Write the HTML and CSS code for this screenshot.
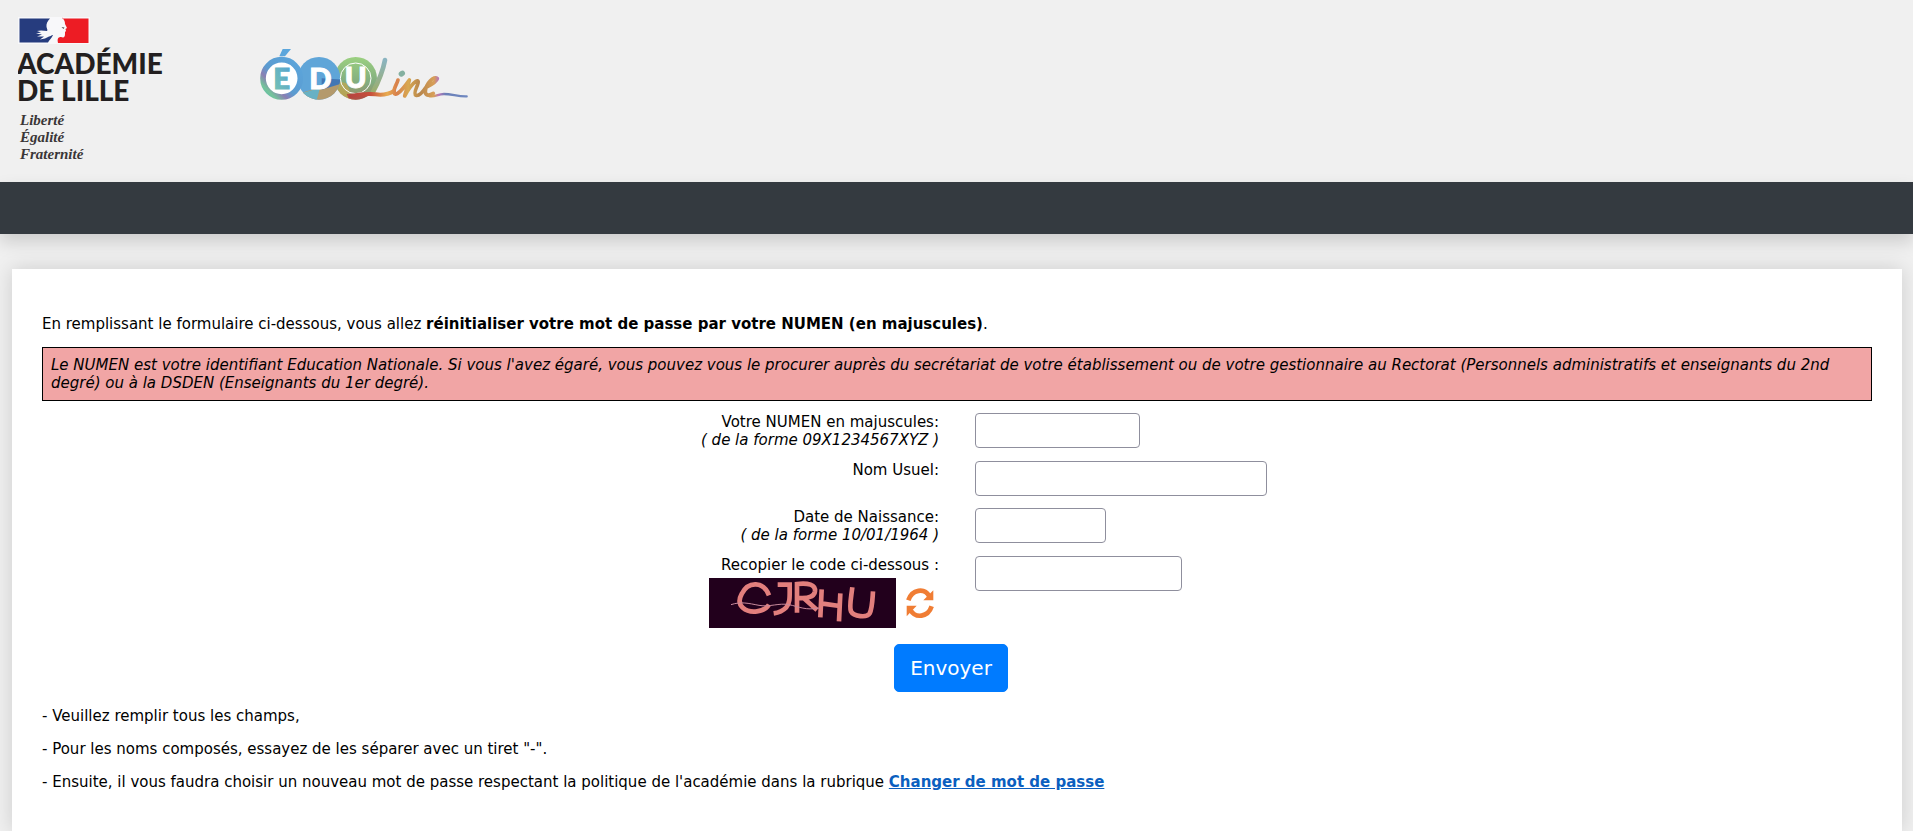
FILE: index.html
```html
<!DOCTYPE html>
<html lang="fr">
<head>
  <meta charset="UTF-8">
  <title>Eduline - Mot de passe</title>
  <link rel="stylesheet" href="styles.css">
</head>
<body>

<header class="header">
  <svg class="logo-academie" width="150" height="148" viewBox="0 0 150 148" role="img" aria-label="Académie de Lille">
    <rect x="0" y="0" width="72" height="27" fill="#f8f8fa"/>
    <path d="M1.500 1.500H32C29.500 4 28 7 28.500 10c.5 2 1.500 3 .5 4l-6-.5-4 .5 4 1.500-5 1 6 1-5 2 7 0-4 3 5-1 4-2c2-.5 3-2 4-1.500-1 3-4 5-5 7.500H1.500z" fill="#263c7e"/>
    <path d="M44 1.500H70.500V26H40c-1-4 0-6 3-6 3 1 4 0 4-3l0-2 1-1-.5-2 1.500-1-2-4c0-3-1-4.500-3-6.500z" fill="#ed1c24"/>
    <path d="M43.500 10l3 .5-1 1.500z" fill="#555"/>
    <text class="academie" x="-1" y="57">ACADÉMIE</text>
    <text class="academie" x="-1" y="84">DE LILLE</text>
    <text class="devise" x="2" y="108">Liberté</text>
    <text class="devise" x="2" y="125">Égalité</text>
    <text class="devise" x="2" y="142">Fraternité</text>
  </svg>

  <svg class="logo-eduline" width="240" height="90" viewBox="0 0 720 270" role="img" aria-label="Éduline">
    <defs>
      <linearGradient id="rond-e" x1="0" y1="1" x2="1" y2="0">
        <stop offset="0" stop-color="#58b8b4"/>
        <stop offset="0.150" stop-color="#74c49a"/>
        <stop offset="0.300" stop-color="#8a7fb4"/>
        <stop offset="0.450" stop-color="#5b9bd0"/>
        <stop offset="1" stop-color="#5ba6dc"/>
      </linearGradient>
      <linearGradient id="lettre-e" x1="0" y1="1" x2="1" y2="0">
        <stop offset="0" stop-color="#7cc7b0"/>
        <stop offset="1" stop-color="#4f9fd4"/>
      </linearGradient>
      <linearGradient id="rond-u" x1="0" y1="0" x2="0" y2="1">
        <stop offset="0" stop-color="#9bd080"/>
        <stop offset="0.600" stop-color="#82ad80"/>
        <stop offset="1" stop-color="#9a8a62"/>
      </linearGradient>
      <linearGradient id="trait" gradientUnits="userSpaceOnUse" x1="330" y1="0" x2="680" y2="0">
        <stop offset="0" stop-color="#b5443f"/>
        <stop offset="0.180" stop-color="#c8503c"/>
        <stop offset="0.320" stop-color="#e8ac50"/>
        <stop offset="0.400" stop-color="#d8804c"/>
        <stop offset="0.500" stop-color="#d8a850"/>
        <stop offset="0.600" stop-color="#b8864c"/>
        <stop offset="0.720" stop-color="#d8a058"/>
        <stop offset="0.760" stop-color="#b878b8"/>
        <stop offset="0.820" stop-color="#6a80b8"/>
        <stop offset="1" stop-color="#7088c0"/>
      </linearGradient>
      <linearGradient id="barre" x1="0" y1="1" x2="0" y2="0">
        <stop offset="0" stop-color="#9cae6c"/>
        <stop offset="1" stop-color="#8ab4c0"/>
      </linearGradient>
      <clipPath id="clip-d"><circle cx="237" cy="145" r="64"/></clipPath>
      <clipPath id="clip-u"><circle cx="347" cy="145" r="64"/></clipPath>
    </defs>

    <circle cx="347" cy="145" r="64" fill="url(#rond-u)"/>
    <g clip-path="url(#clip-u)">
      <path d="M280 150l40 10 20 50h-60z" fill="#c3a94e" opacity="0.700"/>
      <path d="M320 192l100-6v30h-90z" fill="#b5443f" opacity="0.850"/>
    </g>
    <circle cx="237" cy="145" r="64" fill="#5fa5d8"/>
    <g clip-path="url(#clip-d)">
      <path d="M180 190l120-36v60H190z" fill="#b49a6c"/>
      <path d="M175 192l65-18-10 36h-40z" fill="#68b1c4"/>
      <path d="M245 145l60 4v12l-60 18z" fill="#4377b4"/>
    </g>
    <circle cx="125" cy="145" r="56" fill="#fff" stroke="url(#rond-e)" stroke-width="17"/>
    <path d="M128 57h25l-18 22h-17z" fill="#5ba6dc"/>
    <circle cx="347" cy="145" r="46" fill="none" stroke="#fff" stroke-width="3"/>
    <text class="lettre lettre-e" x="125" y="177">E</text>
    <text class="lettre lettre-blanche" x="241" y="177">D</text>
    <text class="lettre lettre-blanche" x="347" y="175">U</text>

    <g fill="none" stroke-linecap="round" stroke-linejoin="round">
      <path d="M435 90c-6 32-20 66-36 96" stroke="url(#barre)" stroke-width="14"/>
      <path d="M332 198c30-6 52-8 74-5 20 3 38 1 56-10" stroke="url(#trait)" stroke-width="12"/>
      <path d="M474 150c-4 14-14 26-12 38 2 12 18-2 28-14 8-10 12-16 18-24-4 18-10 32-14 48 10-18 22-36 34-44 8-5 8 4 4 12-4 10-12 26-4 30 10 3 22-12 30-24 12-6 30-14 34-26-10-10-34 14-36 38 0 16 14 12 24 6" stroke="url(#trait)" stroke-width="11"/>
      <path d="M566 198c16 6 26-6 46-6 24 0 42 8 68 7" stroke="url(#trait)" stroke-width="7"/>
      <path d="M484 132l3-2" stroke="#84b0a0" stroke-width="16"/>
    </g>
  </svg>
</header>

<nav class="navbar"></nav>

<main class="content">
  <p class="intro">En remplissant le formulaire ci-dessous, vous allez <b>réinitialiser votre mot de passe par votre NUMEN (en majuscules)</b>.</p>

  <div class="notice">Le NUMEN est votre identifiant Education Nationale. Si vous l'avez égaré, vous pouvez vous le procurer auprès du secrétariat de votre établissement ou de votre gestionnaire au Rectorat (Personnels administratifs et enseignants du 2nd degré) ou à la DSDEN (Enseignants du 1er degré).</div>

  <form>
    <div class="fields">
      <label for="numen">Votre NUMEN en majuscules:<br><i>( de la forme 09X1234567XYZ )</i></label>
      <input type="text" id="numen" class="w-numen">

      <label for="nom">Nom Usuel:</label>
      <input type="text" id="nom" class="w-nom">

      <label for="naissance">Date de Naissance:<br><i>( de la forme 10/01/1964 )</i></label>
      <input type="text" id="naissance" class="w-date">

      <div class="code">
        <label for="code">Recopier le code ci-dessous :</label>
        <div class="captcha">
          <svg width="187" height="50" viewBox="0 0 561 150" role="img" aria-label="Code de vérification">
            <rect width="561" height="150" fill="#22001c"/>
            <g fill="none" stroke="#e27f7d" stroke-width="14">
              <path d="M180 52C164 10 118 8 98 48c-20 36 14 56 46 52 18-2 30-10 36-20"/>
              <path d="M206 20h36c0 36 2 54-10 68-10 10-24 16-38 18"/>
              <path d="M264 104V18c34-4 56 2 54 22-2 16-22 22-50 20M284 60l40 36"/>
              <path d="M338 34l-4 84M394 46l-4 84M336 76l56 8"/>
              <path d="M430 28c-4 34-10 60-4 72 8 16 48 20 56 6 8-16 8-38 10-66"/>
            </g>
            <path d="M66 80c30-10 52-4 84 2s60-8 90-2 50 18 90 10" fill="none" stroke="#c98a9c" stroke-width="3"/>
          </svg>
          <button type="button" class="refresh" aria-label="Changer le code">
            <svg width="28" height="32" viewBox="0 0 84 96">
              <g fill="none" stroke="#f07d34" stroke-width="14">
                <path d="M7 40C18 6 56 2 70 28"/>
                <path d="M77 58C66 92 28 94 14 70"/>
              </g>
              <path d="M82 10v30H52z" fill="#f07d34"/>
              <path d="M2 88V56h30z" fill="#f07d34"/>
            </svg>
          </button>
        </div>
      </div>
      <input type="text" id="code" class="w-code">
    </div>

    <div class="actions">
      <button type="submit" class="btn">Envoyer</button>
    </div>
  </form>

  <p>- Veuillez remplir tous les champs,</p>
  <p>- Pour les noms composés, essayez de les séparer avec un tiret "-".</p>
  <p>- Ensuite, il vous faudra choisir un nouveau mot de passe respectant la politique de l'académie dans la rubrique <a href="#">Changer de mot de passe</a></p>
</main>

</body>
</html>
```

FILE: styles.css
```css
* {
  box-sizing: border-box;
}

body {
  display: flex;
  flex-direction: column;
  min-height: 100vh;
  margin: 0;
  background-color: #f0f0f0;
  color: #000;
  font-family: Verdana, "DejaVu Sans", sans-serif;
  font-size: 15px;
  line-height: 18px;
}

/* Header */
.header {
  display: flex;
  align-items: flex-start;
  gap: 72px;
  padding: 17px 18px;
}

.header svg {
  display: block;
}

.logo-eduline {
  margin-top: 13px;
}

.academie {
  font: 900 28px Lato, sans-serif;
  fill: #231f20;
}

.devise {
  font: italic bold 15px "Liberation Serif", serif;
  fill: #3a3637;
}

.lettre {
  font: 900 88px Lato, sans-serif;
  text-anchor: middle;
}

.lettre-e {
  fill: url(#lettre-e);
  stroke: url(#lettre-e);
  stroke-width: 3;
}

.lettre-blanche {
  fill: #fff;
  stroke: #fff;
  stroke-width: 3;
}

.navbar {
  height: 52px;
  background-color: #343a40;
  box-shadow: 0 8px 16px rgba(0, 0, 0, 0.15);
}

/* Content */
.content {
  flex: 1;
  margin: 35px 11px 0 12px;
  padding: 46px 30px 24px;
  background-color: white;
  box-shadow: 0 0 20px rgba(0, 0, 0, 0.15);
}

p {
  margin: 0 0 15px;
}

.intro {
  margin-bottom: 14px;
}

.notice {
  margin-bottom: 12px;
  padding: 8px;
  border: 1px solid #000;
  background-color: #f1a5a5;
  font-style: italic;
}

.fields {
  display: grid;
  grid-template-columns: 1fr 1fr;
  gap: 12px 36px;
}

.fields > label,
.code {
  text-align: right;
}

input {
  height: 35px;
  padding: 4px 8px;
  border: 1px solid #8f8f9d;
  border-radius: 4px;
  background-color: white;
  font: inherit;
}

.w-numen {
  width: 165px;
}

.w-nom {
  width: 292px;
}

.w-date {
  width: 131px;
}

.w-code {
  width: 207px;
}

.captcha {
  display: flex;
  justify-content: flex-end;
  align-items: center;
  gap: 10px;
  margin-top: 4px;
  padding-right: 5px;
}

.refresh {
  display: flex;
  padding: 0;
  border: none;
  background: none;
  cursor: pointer;
}

.actions {
  margin: 16px 12px 15px 0;
  text-align: center;
}

.btn {
  padding: 8px 15px;
  border: 1px solid #007bff;
  border-radius: 5px;
  background-color: #007bff;
  color: white;
  font: inherit;
  font-size: 20px;
  line-height: 30px;
  cursor: pointer;
}

.btn:hover {
  background-color: #0069d9;
}

a {
  color: #0b5fbf;
  font-weight: bold;
}
```
